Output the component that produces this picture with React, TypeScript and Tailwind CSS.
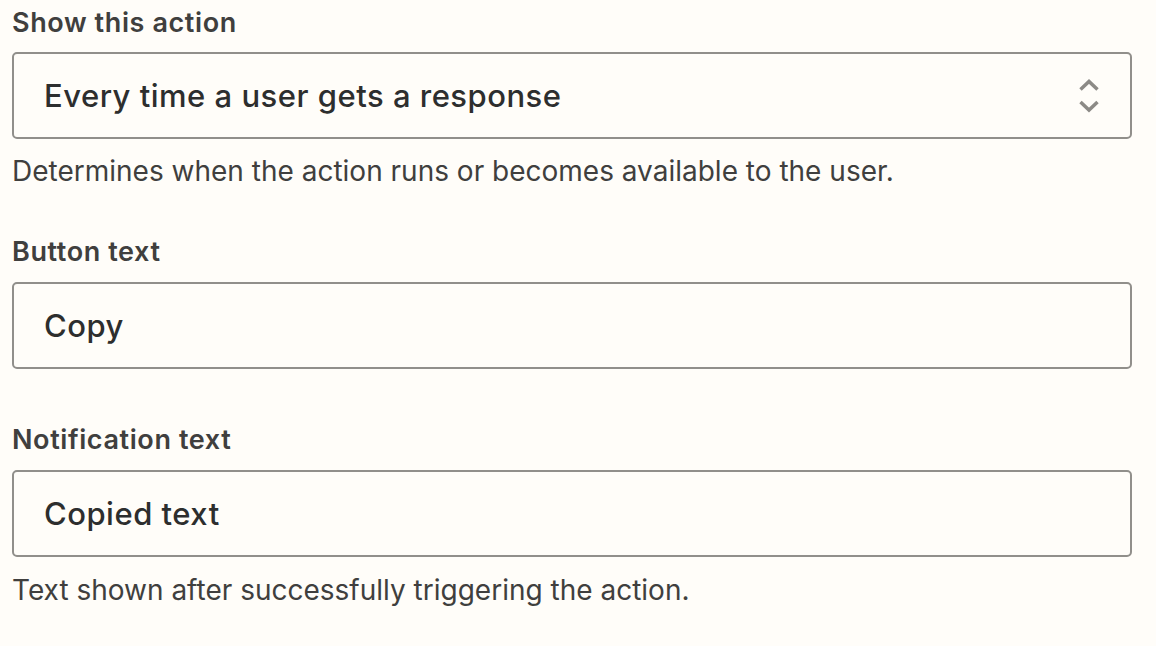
import type { ReactNode } from 'react';

function UpDownIcon() {
  return (
    <svg width="20" height="34" viewBox="0 0 20 34" fill="none" stroke="#8c8a86" strokeWidth="3.5" strokeLinejoin="miter">
      <polyline points="1.5,10.5 10,2.5 18.5,10.5" />
      <polyline points="1.5,23 10,31 18.5,23" />
    </svg>
  );
}

function Box({ children, className = '' }: { children: ReactNode; className?: string }) {
  return (
    <div
      className={`flex h-[87px] items-center justify-between rounded-[5px] border-2 border-[#918f8b] bg-[#fffdf9] pl-[30px] pr-[31px] ${className}`}
    >
      {children}
    </div>
  );
}

const labelCls = 'block text-[27px] font-semibold leading-[32px] tracking-[0.6px]';
const valueCls = 'text-[31px] font-medium leading-[36px] tracking-[0.5px] text-[#2d2e2e]';

export default function App() {
  return (
    <div
      className="min-h-screen bg-[#fffdf9] pl-3 pr-6 pt-[7px] text-[#403f3e]"
      style={{ fontFamily: 'Inter, "Noto Sans", sans-serif' }}
    >
      <label className={labelCls}>Show this action</label>
      <Box className="mt-[13px]">
        <span className={valueCls}>Every time a user gets a response</span>
        <UpDownIcon />
      </Box>
      <p className="mt-[15px] text-[28px] leading-[34px]">
        Determines when the action runs or becomes available to the user.
      </p>

      <label className={`mt-[48px] ${labelCls}`}>Button text</label>
      <Box className="mt-[14px]">
        <span className={valueCls}>Copy</span>
      </Box>

      <label className={`mt-[55px] ${labelCls}`}>Notification text</label>
      <Box className="mt-[14px]">
        <span className={valueCls}>Copied text</span>
      </Box>
      <p className="mt-[16px] text-[28px] leading-[34px]">
        Text shown after successfully triggering the action.
      </p>
    </div>
  );
}
